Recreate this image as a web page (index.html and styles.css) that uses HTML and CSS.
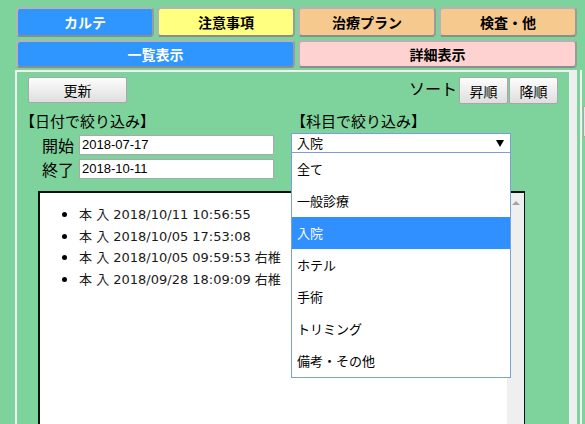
FILE: index.html
```html
<!DOCTYPE html>
<html lang="ja">
<head>
<meta charset="utf-8">
<title>カルテ</title>
<link rel="stylesheet" href="styles.css">
</head>
<body>
<div class="page">
  <div class="tabs">
    <div class="tab tab-blue">カルテ</div>
    <div class="tab tab-yellow">注意事項</div>
    <div class="tab tab-orange">治療プラン</div>
    <div class="tab tab-orange">検査・他</div>
    <div class="tab tab-blue tab-wide">一覧表示</div>
    <div class="tab tab-pink tab-wide">詳細表示</div>
  </div>
  <div class="main">
    <div class="panel">
      <div class="toolbar">
        <button class="btn btn-refresh">更新</button>
        <div class="sort">
          <span class="sort-label">ソート</span>
          <button class="btn btn-small">昇順</button>
          <button class="btn btn-small">降順</button>
        </div>
      </div>
      <div class="filters">
        <div class="filter filter-date">
          <div class="ftitle">【日付で絞り込み】</div>
          <div class="frow"><span class="flabel">開始</span><span class="finput">2018-07-17</span></div>
          <div class="frow"><span class="flabel">終了</span><span class="finput">2018-10-11</span></div>
        </div>
        <div class="filter filter-subject">
          <div class="ftitle">【科目で絞り込み】</div>
          <div class="select"><span>入院</span><span class="arrow"></span></div>
          <ul class="dropdown">
            <li>全て</li>
            <li>一般診療</li>
            <li class="selected">入院</li>
            <li>ホテル</li>
            <li>手術</li>
            <li>トリミング</li>
            <li>備考・その他</li>
          </ul>
        </div>
      </div>
      <div class="listbox">
        <ul class="records">
          <li>本 入 2018/10/11 10:56:55</li>
          <li>本 入 2018/10/05 17:53:08</li>
          <li>本 入 2018/10/05 09:59:53 右椎</li>
          <li>本 入 2018/09/28 18:09:09 右椎</li>
        </ul>
        <div class="scrollbar"><span class="up"></span></div>
      </div>
    </div>
    <div class="side">
      <div class="side-btn"></div>
      <div class="side-table">
        <div class="side-row"></div>
        <div class="side-row"></div>
        <div class="side-row"></div>
        <div class="side-row"></div>
        <div class="side-row"></div>
        <div class="side-row"></div>
        <div class="side-row"></div>
        <div class="side-row"></div>
      </div>
    </div>
  </div>
</div>
</body>
</html>
```

FILE: styles.css
```css
html, body {
  margin: 0;
  padding: 0;
  height: 100%;
  overflow: hidden;
}
body {
  background: #7ed29b;
  font-family: "Noto Sans CJK JP", "Noto Sans", sans-serif;
  color: #000;
}
.page {
  padding: 7px 0 0 15px;
  width: 600px;
}
.tabs {
  display: grid;
  grid-template-columns: repeat(4, 138px);
  grid-auto-rows: auto;
  column-gap: 3px;
  row-gap: 3px;
  margin-left: 1px;
}
.tab {
  box-sizing: border-box;
  height: 30px;
  border: 2px solid #b4b4b4;
  border-bottom-color: #8c8c8c;
  border-right-color: #9a9a9a;
  border-radius: 4px;
  font-weight: bold;
  font-size: 14px;
  line-height: 26px;
  text-align: center;
}
.tab-wide {
  grid-column: span 2;
  height: 28px;
  line-height: 24px;
}
.tab-blue { background: #2f95ff; color: #fff; }
.tab-yellow { background: #ffff80; }
.tab-orange { background: #f6c98e; }
.tab-pink { background: #ffd2d2; }

.main {
  display: flex;
  margin-top: 2px;
  align-items: flex-start;
}
.panel {
  box-sizing: border-box;
  flex: none;
  width: 562px;
  height: 400px;
  border-top: 2px solid #f0f0f0;
  border-left: 2px solid #f0f0f0;
  border-right: 8px solid #eeeeee;
  position: relative;
}
.toolbar {
  display: flex;
  justify-content: space-between;
  align-items: flex-start;
  padding: 5px 11px 0 11px;
}
.btn {
  box-sizing: border-box;
  font-family: "Noto Sans CJK JP", sans-serif;
  font-size: 14px;
  color: #000;
  background: linear-gradient(#fdfdfd, #dedede);
  border: 1px solid #a7a7a7;
  border-radius: 2px;
  padding: 0;
  margin: 0;
}
.btn-refresh {
  width: 99px;
  height: 26px;
}
.sort {
  display: flex;
  align-items: flex-start;
  gap: 1px;
}
.sort-label {
  font-size: 16px;
  line-height: 20px;
  margin-top: 1px;
  margin-right: 1px;
}
.btn-small {
  width: 49px;
  height: 27px;
}
.filters {
  display: grid;
  grid-template-columns: 271px 220px;
  padding-left: 3px;
  margin-top: 7px;
}
.ftitle {
  font-size: 15px;
  line-height: 20px;
}
.filter-date .ftitle { margin-bottom: 4px; }
.frow {
  display: flex;
  align-items: center;
  height: 20px;
  margin-bottom: 4px;
}
.flabel {
  flex: none;
  font-size: 16px;
  width: 32px;
  margin-left: 22px;
  margin-right: 5px;
  line-height: 20px;
}
.finput {
  flex: none;
  box-sizing: border-box;
  width: 195px;
  height: 20px;
  background: #fff;
  border: 1px solid #a9a9a9;
  font-family: "Liberation Sans", Arial, sans-serif;
  font-size: 13px;
  line-height: 18px;
  padding-left: 2px;
}
.filter-subject {
  position: relative;
}
.select {
  box-sizing: border-box;
  margin-top: 2px;
  height: 20px;
  background: #fff;
  border: 1px solid #7ba0d6;
  font-size: 13px;
  line-height: 18px;
  padding-left: 5px;
  display: flex;
  justify-content: space-between;
  align-items: center;
}
.arrow {
  width: 0;
  height: 0;
  border-left: 4px solid transparent;
  border-right: 4px solid transparent;
  border-top: 7px solid #000;
  margin-right: 6px;
}
.dropdown {
  position: absolute;
  left: 0;
  top: 42px;
  z-index: 5;
  box-sizing: border-box;
  width: 220px;
  margin: 0;
  padding: 0;
  list-style: none;
  background: #fff;
  border: 1px solid #7ba0d6;
  border-top: none;
}
.dropdown li {
  height: 32px;
  line-height: 32px;
  font-size: 13px;
  padding-left: 5px;
}
.dropdown li.selected {
  background: #3090ff;
  color: #fff;
}
.listbox {
  box-sizing: border-box;
  display: flex;
  margin: 8px 0 0 21px;
  width: 487px;
  height: 300px;
  background: #fff;
  border-top: 2px solid #111;
  border-left: 2px solid #111;
  border-right: 1px solid #111;
}
.records {
  flex: 1;
  margin: 0;
  padding: 11px 0 0 39px;
  list-style: none;
  overflow: hidden;
  white-space: nowrap;
}
.records li {
  font-family: "DejaVu Sans", "Noto Sans CJK JP", sans-serif;
  font-size: 13px;
  line-height: 21.5px;
  position: relative;
  color: #1a1a1a;
}
.records li::before {
  content: "";
  position: absolute;
  left: -17px;
  top: 8px;
  width: 5px;
  height: 5px;
  border-radius: 50%;
  background: #000;
}
.scrollbar {
  flex: none;
  width: 17px;
  background: #efefef;
  display: flex;
  justify-content: center;
}
.up {
  margin-top: 8px;
  width: 0;
  height: 0;
  border-left: 4px solid transparent;
  border-right: 4px solid transparent;
  border-bottom: 4px solid #a3a3a3;
}
.side {
  flex: none;
  width: 20px;
  height: 400px;
  margin-left: 3px;
  border-left: 2px solid #f0f0f0;
  padding-left: 1px;
}
.side-btn {
  margin-top: 36px;
  height: 29px;
  background: #e6e6e6;
  border: 1px solid #a7a7a7;
}
.side-table {
  margin-top: 19px;
  margin-left: 2px;
  border-left: 1px solid #222;
  height: 300px;
}
.side-row {
  height: 26px;
  border-bottom: 1px solid #444;
}
```
